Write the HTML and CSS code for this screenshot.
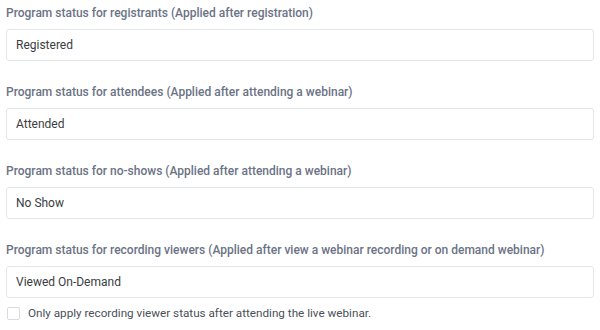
FILE: index.html
```html
<!DOCTYPE html>
<html lang="en">
<head>
    <meta charset="UTF-8">
    <meta name="viewport" content="width=device-width, initial-scale=1.0">
    <title>Program Status</title>
    <link rel="stylesheet" href="styles.css">
</head>
<body>
    <div class="form">
        <div class="field">
            <label class="field-label">Program status for registrants (Applied after registration)</label>
            <input type="text" class="field-input" value="Registered">
        </div>

        <div class="field">
            <label class="field-label">Program status for attendees (Applied after attending a webinar)</label>
            <input type="text" class="field-input" value="Attended">
        </div>

        <div class="field">
            <label class="field-label">Program status for no-shows (Applied after attending a webinar)</label>
            <input type="text" class="field-input" value="No Show">
        </div>

        <div class="field">
            <label class="field-label">Program status for recording viewers (Applied after view a webinar recording or on demand webinar)</label>
            <input type="text" class="field-input" value="Viewed On-Demand">
            <label class="check-row">
                <span class="check-box"></span>
                Only apply recording viewer status after attending the live webinar.
            </label>
        </div>
    </div>
</body>
</html>
```

FILE: styles.css
```css
body {
    font-family: 'Roboto', sans-serif;
    background: #fff;
    margin: 0;
    padding: 4px 6px 0 6px;
    color: #333;
}

.form {
    display: flex;
    flex-direction: column;
    gap: 22px;
}

.field {
    display: flex;
    flex-direction: column;
}

.field-label {
    font-size: 12px;
    font-weight: 500;
    color: #6b7385;
    line-height: 18px;
    margin-bottom: 7px;
}

.field-input {
    box-sizing: border-box;
    height: 32px;
    width: 588px;
    padding: 0 9px;
    border: 1px solid #e3e6ea;
    border-radius: 3px;
    font-family: inherit;
    font-size: 12px;
    color: #3a3d42;
    outline: none;
}

.check-row {
    display: flex;
    align-items: center;
    gap: 8px;
    margin-top: 8px;
    padding-left: 1px;
    font-size: 11.7px;
    color: #4a4f59;
}

.check-box {
    width: 11px;
    height: 11px;
    border: 1px solid #d8dbe0;
    border-radius: 2px;
}
```
